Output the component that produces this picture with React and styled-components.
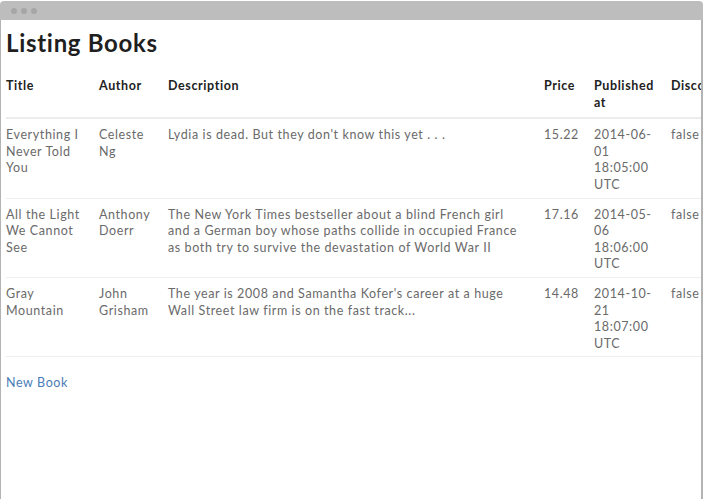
import React from "react";
import styled, { createGlobalStyle } from "styled-components";

const GlobalStyle = createGlobalStyle`
  html, body {
    margin: 0;
    padding: 0;
    background: #fff;
    overflow: hidden;
  }
  body {
    font-family: Lato, "Open Sans", sans-serif;
  }
`;

const Frame = styled.div`
  width: 703px;
  height: 499px;
  box-sizing: border-box;
  display: flex;
  flex-direction: column;
  overflow: hidden;
`;

const TitleBar = styled.div`
  height: 19px;
  margin-top: 1px;
  background: #bdbdbd;
  border-radius: 4px 4px 0 0;
  display: flex;
  align-items: center;
  gap: 4px;
  padding-left: 11px;
  flex-shrink: 0;
`;

const Dot = styled.span`
  width: 6px;
  height: 6px;
  border-radius: 50%;
  background: #a6a6a6;
`;

const Viewport = styled.div`
  flex: 1;
  border-left: 1px solid #b3b3b3;
  border-right: 2px solid #b3b3b3;
  overflow: hidden;
  padding: 0 0 0 5px;
`;

const Heading = styled.h1`
  margin: 9px 0 13px;
  font-size: 24px;
  font-weight: 700;
  letter-spacing: 0.7px;
  color: #1f1f1f;
  line-height: 28px;
`;

const Table = styled.table`
  border-collapse: collapse;
  table-layout: fixed;
  width: 760px;
  font-size: 12.5px;
  line-height: 16.6px;
  letter-spacing: 0.6px;
`;

const Th = styled.th`
  text-align: left;
  vertical-align: top;
  font-weight: 700;
  color: #222;
  padding: 8px 0 6px 0;
  border-bottom: 2px solid #ececec;
`;

const Td = styled.td`
  vertical-align: top;
  color: #6a6a6a;
  padding: 8px ${(p) => p.$padRight || 12}px 4px 0;
  border-bottom: 1px solid #efefef;
`;

const NewLink = styled.a`
  display: inline-block;
  margin-top: 18px;
  font-size: 12.5px;
  letter-spacing: 0.6px;
  color: #4a7bb7;
  text-decoration: none;
`;

const books = [
  {
    title: "Everything I Never Told You",
    author: "Celeste Ng",
    description: "Lydia is dead. But they don't know this yet . . .",
    price: "15.22",
    published: ["2014-06-", "01", "18:05:00", "UTC"],
  },
  {
    title: "All the Light We Cannot See",
    author: "Anthony Doerr",
    description:
      "The New York Times bestseller about a blind French girl and a German boy whose paths collide in occupied France as both try to survive the devastation of World War II",
    price: "17.16",
    published: ["2014-05-", "06", "18:06:00", "UTC"],
  },
  {
    title: "Gray Mountain",
    author: "John Grisham",
    description:
      "The year is 2008 and Samantha Kofer's career at a huge Wall Street law firm is on the fast track...",
    price: "14.48",
    published: ["2014-10-", "21", "18:07:00", "UTC"],
  },
];

const widths = [93, 69, 376, 50, 77, 95];

export default function App() {
  return (
    <>
      <GlobalStyle />
      <Frame>
        <TitleBar>
          <Dot />
          <Dot />
          <Dot />
        </TitleBar>
        <Viewport>
          <Heading>Listing Books</Heading>
          <Table>
            <colgroup>
              {widths.map((w, i) => (
                <col key={i} style={{ width: w }} />
              ))}
            </colgroup>
            <thead>
              <tr>
                <Th>Title</Th>
                <Th>Author</Th>
                <Th>Description</Th>
                <Th>Price</Th>
                <Th>
                  Published
                  <br />
                  at
                </Th>
                <Th>Discontinued</Th>
              </tr>
            </thead>
            <tbody>
              {books.map((b) => (
                <tr key={b.title}>
                  <Td>{b.title}</Td>
                  <Td>{b.author}</Td>
                  <Td $padRight={17}>{b.description}</Td>
                  <Td>{b.price}</Td>
                  <Td>
                    {b.published.map((p, i) => (
                      <div key={i}>{p}</div>
                    ))}
                  </Td>
                  <Td>false</Td>
                </tr>
              ))}
            </tbody>
          </Table>
          <NewLink href="#">New Book</NewLink>
        </Viewport>
      </Frame>
    </>
  );
}
